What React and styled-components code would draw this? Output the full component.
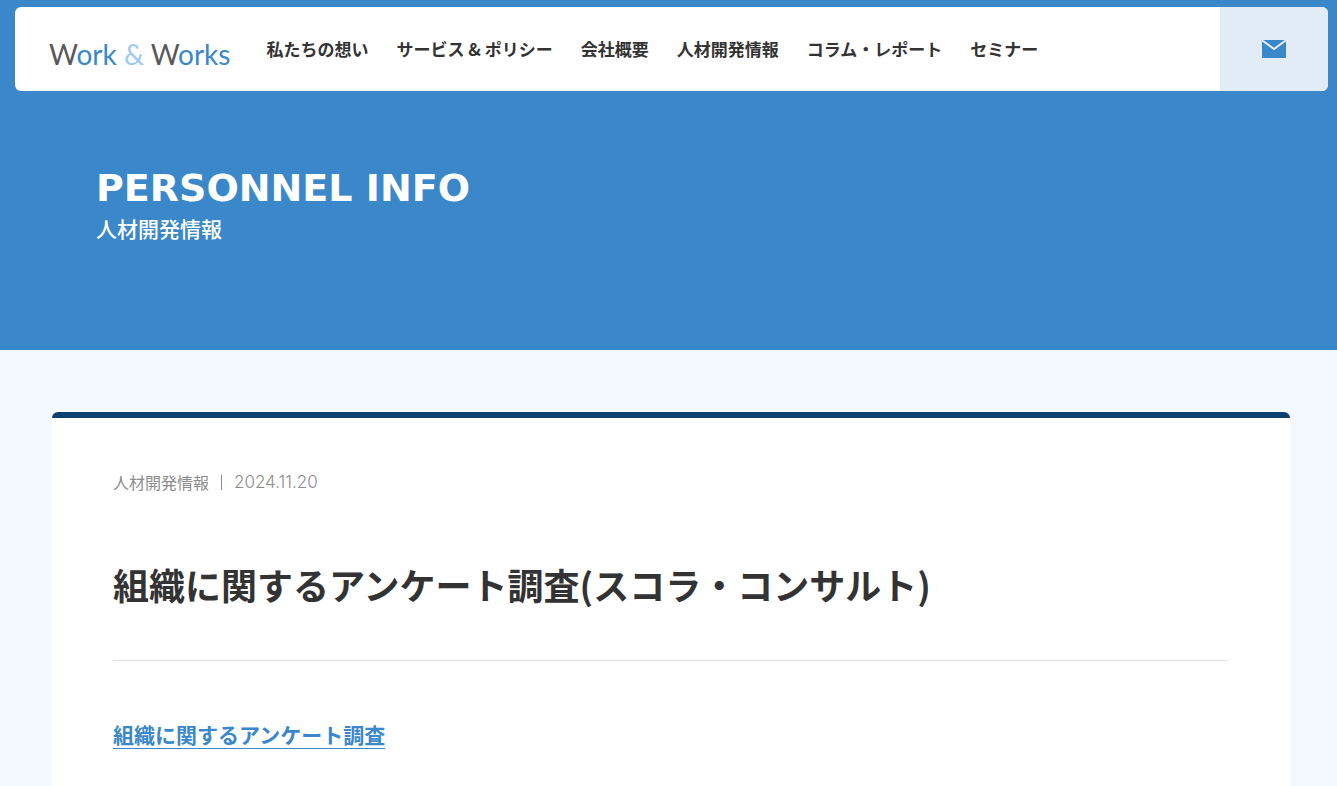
import styled, { createGlobalStyle } from "styled-components";

const navItems = [
    "私たちの想い",
    "サービス & ポリシー",
    "会社概要",
    "人材開発情報",
    "コラム・レポート",
    "セミナー",
];

const App = () => {
    return (
        <Page>
            <GlobalStyle />
            <Hero>
                <Header>
                    <Logo href="/">
                        <LogoInitial>W</LogoInitial>ork <LogoAnd>&amp;</LogoAnd> <LogoInitial>W</LogoInitial>orks
                    </Logo>
                    <Nav>
                        {navItems.map((item) => (
                            <NavLink href="/" key={item}>{item}</NavLink>
                        ))}
                    </Nav>
                    <MailLink href="/" aria-label="お問い合わせ">
                        <svg width="24" height="18" viewBox="0 0 24 18" fill="currentColor" aria-hidden="true">
                            <path d="M1.4 0h21.2L12 7.7z" />
                            <path d="M0 1.5 12 10.3 24 1.5V17a1 1 0 0 1-1 1H1a1 1 0 0 1-1-1z" />
                        </svg>
                    </MailLink>
                </Header>
                <HeroText>
                    <HeroTitle>PERSONNEL INFO</HeroTitle>
                    <HeroSub>人材開発情報</HeroSub>
                </HeroText>
            </Hero>
            <Main>
                <Article>
                    <Meta>
                        <Category>人材開発情報</Category>
                        <PostDate dateTime="2024-11-20">2024.11.20</PostDate>
                    </Meta>
                    <Title>組織に関するアンケート調査(スコラ・コンサルト)</Title>
                    <Body>
                        <TextLink href="/">組織に関するアンケート調査</TextLink>
                    </Body>
                </Article>
            </Main>
        </Page>
    );
};

const GlobalStyle = createGlobalStyle`
    * {
        box-sizing: border-box;
    }
    body {
        margin: 0;
        background-color: #f3f9fe;
        color: #333333;
        font-family: "Noto Sans CJK JP", sans-serif;
    }
    a {
        text-decoration: none;
    }
`;

const Page = styled.div`
    display: flex;
    flex-direction: column;
    min-height: 100vh;
`;

const Hero = styled.div`
    padding: 7px 9px 106px 15px;
    background-color: #3a87c9;
`;

const Header = styled.header`
    display: flex;
    align-items: stretch;
    min-height: 84px;
    padding-left: 34px;
    border-radius: 6px;
    background-color: #ffffff;
    overflow: hidden;
`;

const Logo = styled.a`
    align-self: center;
    padding-top: 10px;
    font-family: Lato, sans-serif;
    font-size: 28px;
    line-height: 36px;
    white-space: nowrap;
    color: #3a87c9;
`;

const LogoInitial = styled.span`
    color: #595959;
`;

const LogoAnd = styled.span`
    color: #9bcbf0;
`;

const Nav = styled.nav`
    display: flex;
    flex: 1;
    align-items: center;
    gap: 28px;
    margin-left: 36px;
`;

const NavLink = styled.a`
    font-size: 17px;
    font-weight: 700;
    line-height: 24px;
    white-space: nowrap;
    color: #333333;
`;

const MailLink = styled.a`
    display: flex;
    align-items: center;
    justify-content: center;
    width: 108px;
    background-color: #e1ecf7;
    color: #3a87c9;
`;

const HeroText = styled.div`
    padding: 73px 81px 0;
    color: #ffffff;
`;

const HeroTitle = styled.h1`
    margin: 0;
    font-family: "DejaVu Sans", sans-serif;
    font-size: 38px;
    font-weight: 700;
    line-height: 48px;
`;

const HeroSub = styled.p`
    margin: 0;
    font-size: 21px;
    font-weight: 500;
    line-height: 32px;
`;

const Main = styled.main`
    display: flex;
    flex: 1;
    padding: 62px 47px 0 52px;
`;

const Article = styled.article`
    flex: 1;
    padding: 48px 62px 24px 61px;
    border-top: 6px solid #0e4170;
    border-radius: 6px 6px 0 0;
    background-color: #ffffff;
`;

const Meta = styled.div`
    display: flex;
    align-items: center;
    line-height: 32px;
    color: #8c8c8c;
`;

const Category = styled.span`
    display: flex;
    align-items: center;
    font-size: 16px;

    &::after {
        content: "";
        height: 15px;
        margin: 0 12px;
        border-left: 1px solid #8c8c8c;
    }
`;

const PostDate = styled.time`
    font-family: Inter, sans-serif;
    font-size: 17px;
    font-weight: 300;
`;

const Title = styled.h2`
    margin: 59px 0 0;
    padding-bottom: 49px;
    border-bottom: 1px solid #e0e0e0;
    font-size: 36px;
    font-weight: 700;
    line-height: 54px;
`;

const Body = styled.div`
    padding-top: 59px;
    line-height: 28px;
`;

const TextLink = styled.a`
    display: inline-block;
    border-bottom: 1px solid #3a87c9;
    font-size: 21px;
    font-weight: 700;
    line-height: 28px;
    color: #3a87c9;
`;

export default App;
